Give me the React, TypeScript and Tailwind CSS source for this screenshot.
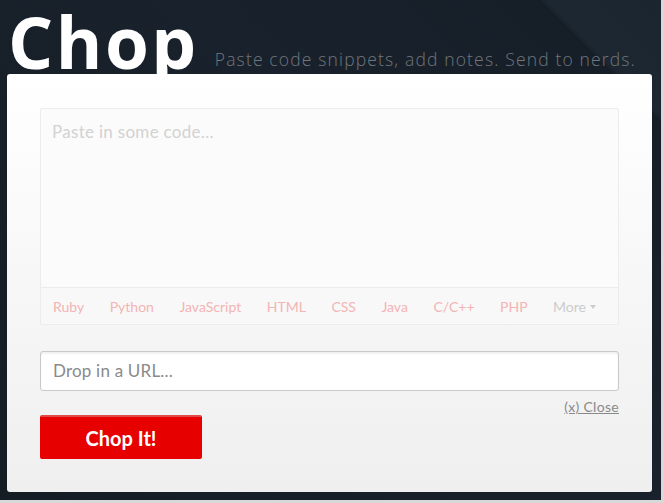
const languages = ['Ruby', 'Python', 'JavaScript', 'HTML', 'CSS', 'Java', 'C/C++', 'PHP'];

export default function App() {
  return (
    <div className="h-[503px] w-[664px] overflow-hidden bg-[#d8d8d8] font-['Lato',sans-serif]">
      <div className="h-[500px] w-[661px] bg-[linear-gradient(225deg,#1b2530_0%,#1d2731_10%,#161f28_10.5%,#19222c_40%,#141c24_100%)] pl-[7px]">
        <header className="flex h-[74px] items-end">
          <h1 className="-mb-[5px] ml-[1px] font-['Open_Sans',sans-serif] text-[71px] font-bold leading-[74px] tracking-[2.5px] text-white">Chop</h1>
          <p className="mb-[6px] ml-[16px] font-['Open_Sans',sans-serif] text-[17.5px] leading-none font-light tracking-[1.15px] text-[#70767c]">Paste code snippets, add notes. Send to nerds.</p>
        </header>

        <main className="relative h-[418px] w-[645px] rounded-[3px] bg-[linear-gradient(180deg,#ffffff_0%,#f7f7f7_50%,#efefef_100%)] px-[33px] pt-[34px]">
          <div className="rounded-[2px] border border-[#ececec] bg-[#fbfbfb]">
            <div className="h-[178px] px-[11px] pt-[10px] text-[17px] tracking-[0.3px] text-[#d2d2d2]">Paste in some code...</div>
            <nav className="flex h-[37px] items-center gap-[25.5px] border-t border-[#ececec] bg-[#f8f8f8] px-[12px] text-[14px] text-[#f4b4b4]">
              {languages.map((lang) => (
                <span key={lang}>{lang}</span>
              ))}
              <span className="flex items-center text-[#cccccc]">
                More
                <span className="ml-[4px] mt-[2px] h-0 w-0 border-x-[3px] border-t-[4px] border-x-transparent border-t-[#cccccc]" />
              </span>
            </nav>
          </div>

          <div className="mt-[26px] flex h-[40px] items-center rounded-[3px] border border-[#c9c9c9] bg-white px-[12px] text-[17px] tracking-[0.2px] text-[#8a8a8a] shadow-[inset_0_2px_2px_rgba(0,0,0,0.06)]">
            Drop in a URL...
          </div>

          <div className="mt-[9px] flex justify-end">
            <span className="text-[14px] leading-none tracking-[0.3px] text-[#8a8a8a] underline">(x) Close</span>
          </div>

          <button className="mt-[1px] flex h-[44px] w-[162px] items-center justify-center rounded-[2px] border-t-2 border-[#e24a4a] bg-[#e60000] text-[20px] font-bold text-white">
            Chop It!
          </button>
        </main>
      </div>
    </div>
  );
}
